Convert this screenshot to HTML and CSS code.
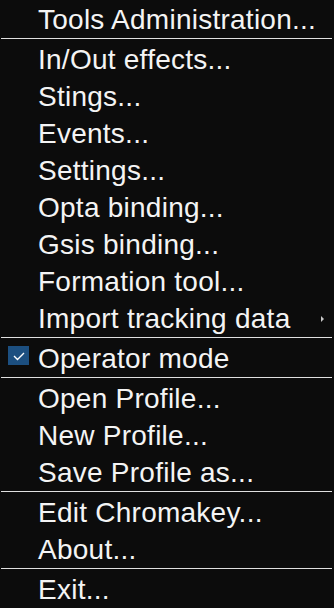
FILE: index.html
```html
<!DOCTYPE html>
<html>
<head>
<meta charset="utf-8">
<link rel="stylesheet" href="styles.css">
</head>
<body>
<ul class="menu">
  <li class="item">Tools Administration...</li>
  <li class="sep"></li>
  <li class="item">In/Out effects...</li>
  <li class="item">Stings...</li>
  <li class="item">Events...</li>
  <li class="item">Settings...</li>
  <li class="item">Opta binding...</li>
  <li class="item">Gsis binding...</li>
  <li class="item">Formation tool...</li>
  <li class="item sub">Import tracking data<span class="arrow"></span></li>
  <li class="sep"></li>
  <li class="item checked"><span class="check"><svg width="14" height="10" viewBox="0 0 14 10"><path d="M2 5 L5.5 8.5 L12 2" fill="none" stroke="#ffffff" stroke-width="1.4"/></svg></span>Operator mode</li>
  <li class="sep"></li>
  <li class="item">Open Profile...</li>
  <li class="item">New Profile...</li>
  <li class="item">Save Profile as...</li>
  <li class="sep"></li>
  <li class="item">Edit Chromakey...</li>
  <li class="item">About...</li>
  <li class="sep"></li>
  <li class="item">Exit...</li>
  <li class="sep"></li>
</ul>
</body>
</html>
```
FILE: styles.css
```css
html, body {
  margin: 0;
  padding: 0;
  background: #0c0c0c;
}
body {
  width: 334px;
  height: 608px;
  overflow: hidden;
  font-family: "Liberation Sans", Arial, sans-serif;
}
.menu {
  list-style: none;
  margin: 0;
  padding: 0;
  display: flex;
  flex-direction: column;
}
.item {
  position: relative;
  height: 35px;
  padding-top: 2px;
  line-height: 35px;
  padding-left: 38px;
  font-size: 28px;
  letter-spacing: 0.25px;
  color: #f4f4f4;
  white-space: nowrap;
}
.sep {
  height: 1px;
  margin: 1px 2px 1px 1px;
  background: #e0e0e0;
}
.arrow {
  position: absolute;
  left: 321px;
  top: 17px;
  width: 0;
  height: 0;
  border-top: 3px solid transparent;
  border-bottom: 3px solid transparent;
  border-left: 3px solid #c8c8c8;
}
.check {
  position: absolute;
  left: 8px;
  top: 7px;
  width: 21px;
  height: 19px;
  background: #1c4f80;
  display: flex;
  align-items: center;
  justify-content: center;
}
```
